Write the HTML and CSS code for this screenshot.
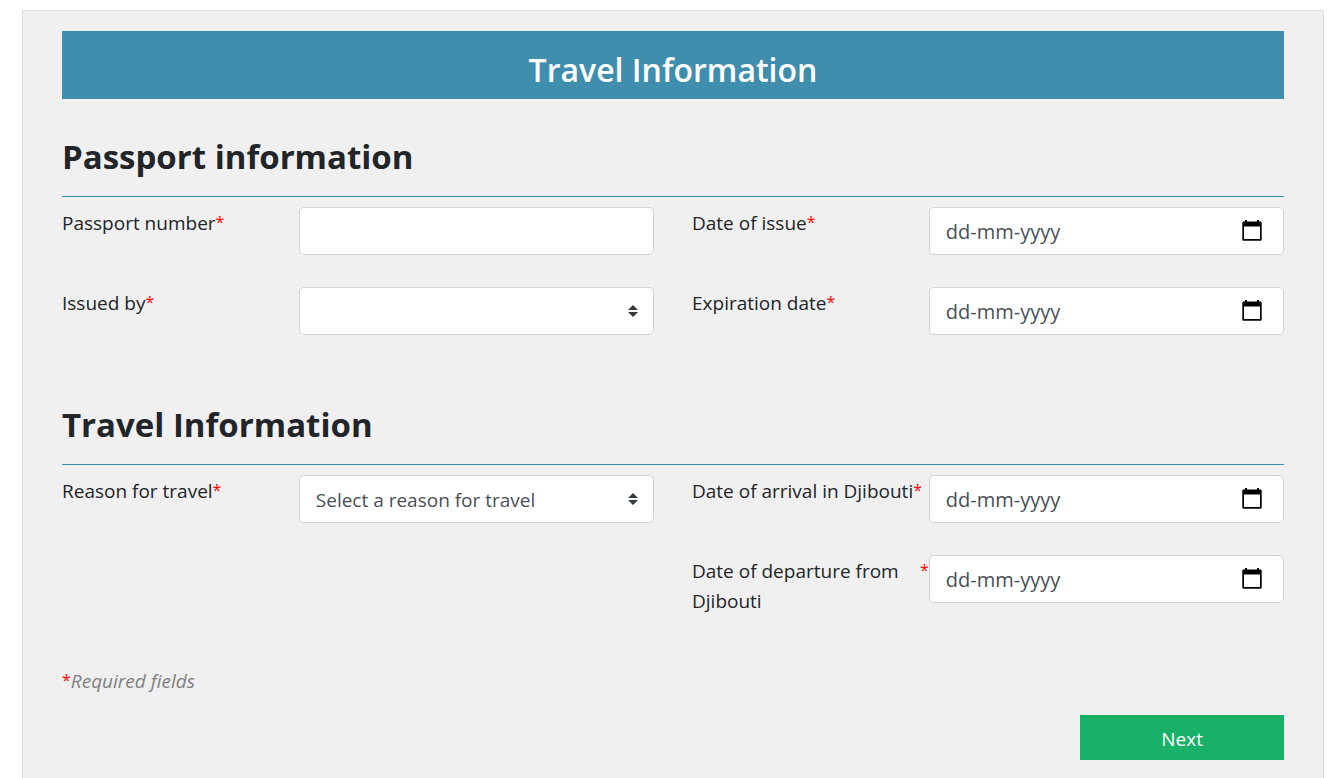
FILE: index.html
```html
<!DOCTYPE html>
<html lang="en">
<head>
<meta charset="utf-8">
<meta name="viewport" content="width=device-width, initial-scale=1">
<title>Travel Information</title>
<link rel="stylesheet" href="styles.css">
</head>
<body>
<svg class="sprite" aria-hidden="true">
  <symbol id="calendar" viewBox="0 0 20 21">
    <path fill-rule="evenodd" d="M3 0h2v1.500h10V0h2v1.500h1.500A1.200 1.200 0 0 1 19.700 2.700v16.800a1.200 1.200 0 0 1-1.200 1.200h-17A1.200 1.200 0 0 1 .3 19.500V2.700A1.200 1.200 0 0 1 1.500 1.500H3zM2 6.500v12.500h16V6.500z"/>
  </symbol>
  <symbol id="sort" viewBox="0 0 10 12">
    <path d="M0 5l5-5 5 5zM0 7h10l-5 5z"/>
  </symbol>
</svg>
<main class="page">
  <form class="card">
    <h1 class="banner">Travel Information</h1>

    <section class="section">
      <h2 class="section-title">Passport information</h2>
      <div class="fields">
        <div class="field">
          <label class="label" for="number"><span>Passport number</span><span class="star">*</span></label>
          <input class="control" type="text" id="number" required>
        </div>
        <div class="field">
          <label class="label" for="issue"><span>Date of issue</span><span class="star">*</span></label>
          <div class="control date">
            <input class="date-input" type="text" id="issue" placeholder="dd-mm-yyyy" required>
            <button class="date-button" type="button" aria-label="Choose date of issue"><svg class="calendar"><use href="#calendar"/></svg></button>
          </div>
        </div>
        <div class="field">
          <label class="label" for="issuer"><span>Issued by</span><span class="star">*</span></label>
          <div class="select-wrap">
            <select class="control select" id="issuer" required><option value=""></option></select>
            <svg class="sort" aria-hidden="true"><use href="#sort"/></svg>
          </div>
        </div>
        <div class="field">
          <label class="label" for="expiry"><span>Expiration date</span><span class="star">*</span></label>
          <div class="control date">
            <input class="date-input" type="text" id="expiry" placeholder="dd-mm-yyyy" required>
            <button class="date-button" type="button" aria-label="Choose expiration date"><svg class="calendar"><use href="#calendar"/></svg></button>
          </div>
        </div>
      </div>
    </section>

    <section class="section">
      <h2 class="section-title">Travel Information</h2>
      <div class="fields">
        <div class="field">
          <label class="label" for="reason"><span>Reason for travel</span><span class="star">*</span></label>
          <div class="select-wrap">
            <select class="control select" id="reason" required><option value="">Select a reason for travel</option></select>
            <svg class="sort" aria-hidden="true"><use href="#sort"/></svg>
          </div>
        </div>
        <div class="field">
          <label class="label" for="arrival"><span>Date of arrival in Djibouti</span><span class="star">*</span></label>
          <div class="control date">
            <input class="date-input" type="text" id="arrival" placeholder="dd-mm-yyyy" required>
            <button class="date-button" type="button" aria-label="Choose date of arrival"><svg class="calendar"><use href="#calendar"/></svg></button>
          </div>
        </div>
        <div class="field field-right">
          <label class="label" for="departure"><span>Date of departure from Djibouti</span><span class="star">*</span></label>
          <div class="control date">
            <input class="date-input" type="text" id="departure" placeholder="dd-mm-yyyy" required>
            <button class="date-button" type="button" aria-label="Choose date of departure"><svg class="calendar"><use href="#calendar"/></svg></button>
          </div>
        </div>
      </div>
    </section>

    <p class="note"><span class="star">*</span><em>Required fields</em></p>
    <div class="actions"><button class="next" type="submit">Next</button></div>
  </form>
</main>
</body>
</html>
```

FILE: styles.css
```css
* { box-sizing: border-box; }

body {
  margin: 0;
  background: #fff;
  color: #212529;
  font: 19px/30px "Segoe UI", "Open Sans", "Noto Sans", sans-serif;
}

h1, h2, p { margin: 0; }

.sprite { display: none; }

.page { padding: 10px 13px 0 22px; }

.card {
  min-height: calc(100vh - 10px);
  padding: 20px 39px 18px;
  border: 1px solid #dfdfdf;
  border-bottom: 0;
  background: #f0f0f0;
}

.banner {
  padding: 17px 0 7px;
  background: #3f8eae;
  color: #fff;
  font-size: 32px;
  font-weight: 600;
  line-height: 44px;
  text-align: center;
}

.section-title {
  padding: 36px 0 17px;
  border-bottom: 1px solid #3f8eae;
  font-size: 33px;
  font-weight: 700;
  line-height: 44px;
}

.fields {
  display: grid;
  grid-template-columns: 1fr 1fr;
  column-gap: 38px;
  padding-top: 10px;
}

.field {
  display: grid;
  grid-template-columns: 2fr 3fr;
  align-items: start;
  height: 80px;
}

.field-right { grid-column: 2; }

.label {
  display: flex;
  padding-top: 1px;
}

.star {
  color: #f00;
  font-size: 16px;
  line-height: 28px;
}

.control {
  width: 100%;
  height: 48px;
  padding: 0 16px;
  border: 1px solid #ced4da;
  border-radius: 5px;
  background: #fff;
  color: #495057;
  font: inherit;
}

.select-wrap {
  display: grid;
  align-items: center;
}

.select-wrap > * { grid-area: 1 / 1; }

.select {
  padding-top: 2px;
  appearance: none;
}

.sort {
  justify-self: end;
  width: 10px;
  height: 12px;
  margin-right: 16px;
  fill: #343a40;
  pointer-events: none;
}

.date {
  display: flex;
  align-items: center;
}

.date-input {
  flex: 1;
  min-width: 0;
  padding: 2px 0 0;
  border: 0;
  outline: 0;
  background: none;
  color: inherit;
  font: inherit;
  font-size: 20px;
}

.date-input::placeholder { color: #495057; opacity: 1; }

.date-button {
  display: flex;
  padding: 0 5px 2px;
  border: 0;
  background: none;
  color: #000;
}

.calendar {
  width: 20px;
  height: 21px;
  fill: currentColor;
}

.note {
  display: flex;
  padding-top: 31px;
  color: #808080;
}

.actions {
  display: grid;
  grid-template-columns: 5fr 1fr;
  padding-top: 19px;
}

.next {
  grid-column: 2;
  height: 45px;
  padding: 2px 0 0;
  border: 0;
  background: #19b067;
  color: #fff;
  font: inherit;
}
```
